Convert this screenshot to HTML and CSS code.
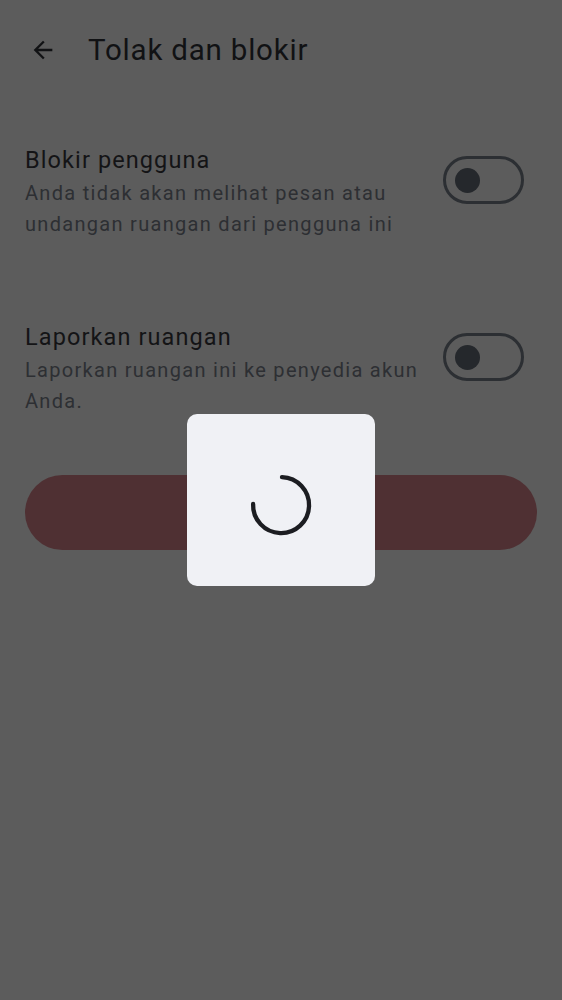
FILE: index.html
```html
<!DOCTYPE html>
<html lang="id">
<head>
<meta charset="utf-8">
<link rel="stylesheet" href="styles.css">
</head>
<body>
<div class="screen">
  <header class="topbar">
    <svg class="back" viewBox="0 0 24 24" width="28" height="28"><path d="M20 11H7.83l5.59-5.59L12 4l-8 8 8 8 1.41-1.41L7.83 13H20v-2z" fill="#111214"/></svg>
    <h1 class="title">Tolak dan blokir</h1>
  </header>
  <section class="row row-first">
    <div class="texts">
      <div class="row-title">Blokir pengguna</div>
      <div class="row-desc">Anda tidak akan melihat pesan atau undangan ruangan dari pengguna ini</div>
    </div>
    <div class="toggle"><span class="knob"></span></div>
  </section>
  <section class="row row-second">
    <div class="texts">
      <div class="row-title">Laporkan ruangan</div>
      <div class="row-desc">Laporkan ruangan ini ke penyedia akun Anda.</div>
    </div>
    <div class="toggle"><span class="knob"></span></div>
  </section>
  <div class="btn-wrap"><div class="btn">Tolak</div></div>
</div>
<div class="dialog">
  <svg class="spinner" viewBox="0 0 64 64" width="64" height="64">
    <path d="M33 4.1 A28 28 0 1 1 4.1 31" fill="none" stroke="#1c1d21" stroke-width="4.3" stroke-linecap="round"/>
  </svg>
</div>
</body>
</html>
```
FILE: styles.css
```css
html, body {
  margin: 0;
  padding: 0;
}
body {
  background: #5c5c5c;
  width: 562px;
  height: 1000px;
  overflow: hidden;
  font-family: Roboto, "Noto Sans", sans-serif;
}
.screen {
  display: flex;
  flex-direction: column;
}
.topbar {
  display: flex;
  align-items: center;
  height: 100px;
  padding-left: 29px;
}
.back {
  display: block;
}
.title {
  margin: 0 0 0 31px;
  font-size: 29.5px;
  font-weight: 400;
  color: #111214;
  letter-spacing: 0.8px;
}
.row {
  display: flex;
  align-items: flex-start;
  justify-content: space-between;
  padding: 0 38px 0 25px;
}
.row-first {
  margin-top: 45px;
}
.row-second {
  margin-top: 82px;
}
.texts {
  width: 410px;
}
.row-title {
  font-size: 23.5px;
  line-height: 30px;
  color: #141416;
  letter-spacing: 1.1px;
}
.row-desc {
  margin-top: 3px;
  font-size: 20px;
  line-height: 31px;
  color: #2d2f33;
  letter-spacing: 1.3px;
}
.toggle {
  box-sizing: border-box;
  width: 81px;
  height: 48px;
  border: 3px solid #2c2f33;
  border-radius: 24px;
  display: flex;
  align-items: center;
  padding-left: 9px;
  margin-top: 11px;
  flex: none;
}
.knob {
  width: 25px;
  height: 25px;
  border-radius: 50%;
  background: #25282c;
}
.btn-wrap {
  padding: 0 25px;
  margin-top: 58px;
}
.btn {
  height: 75px;
  border-radius: 38px;
  background: #4f3033;
  color: #4f3033;
  display: flex;
  align-items: center;
  justify-content: center;
  font-size: 20px;
}
.dialog {
  position: fixed;
  left: 187px;
  top: 414px;
  width: 188px;
  height: 172px;
  border-radius: 10px;
  background: #f0f1f5;
  display: flex;
  align-items: center;
  justify-content: center;
}
.spinner {
  display: block;
  margin-top: 10px;
}
```
